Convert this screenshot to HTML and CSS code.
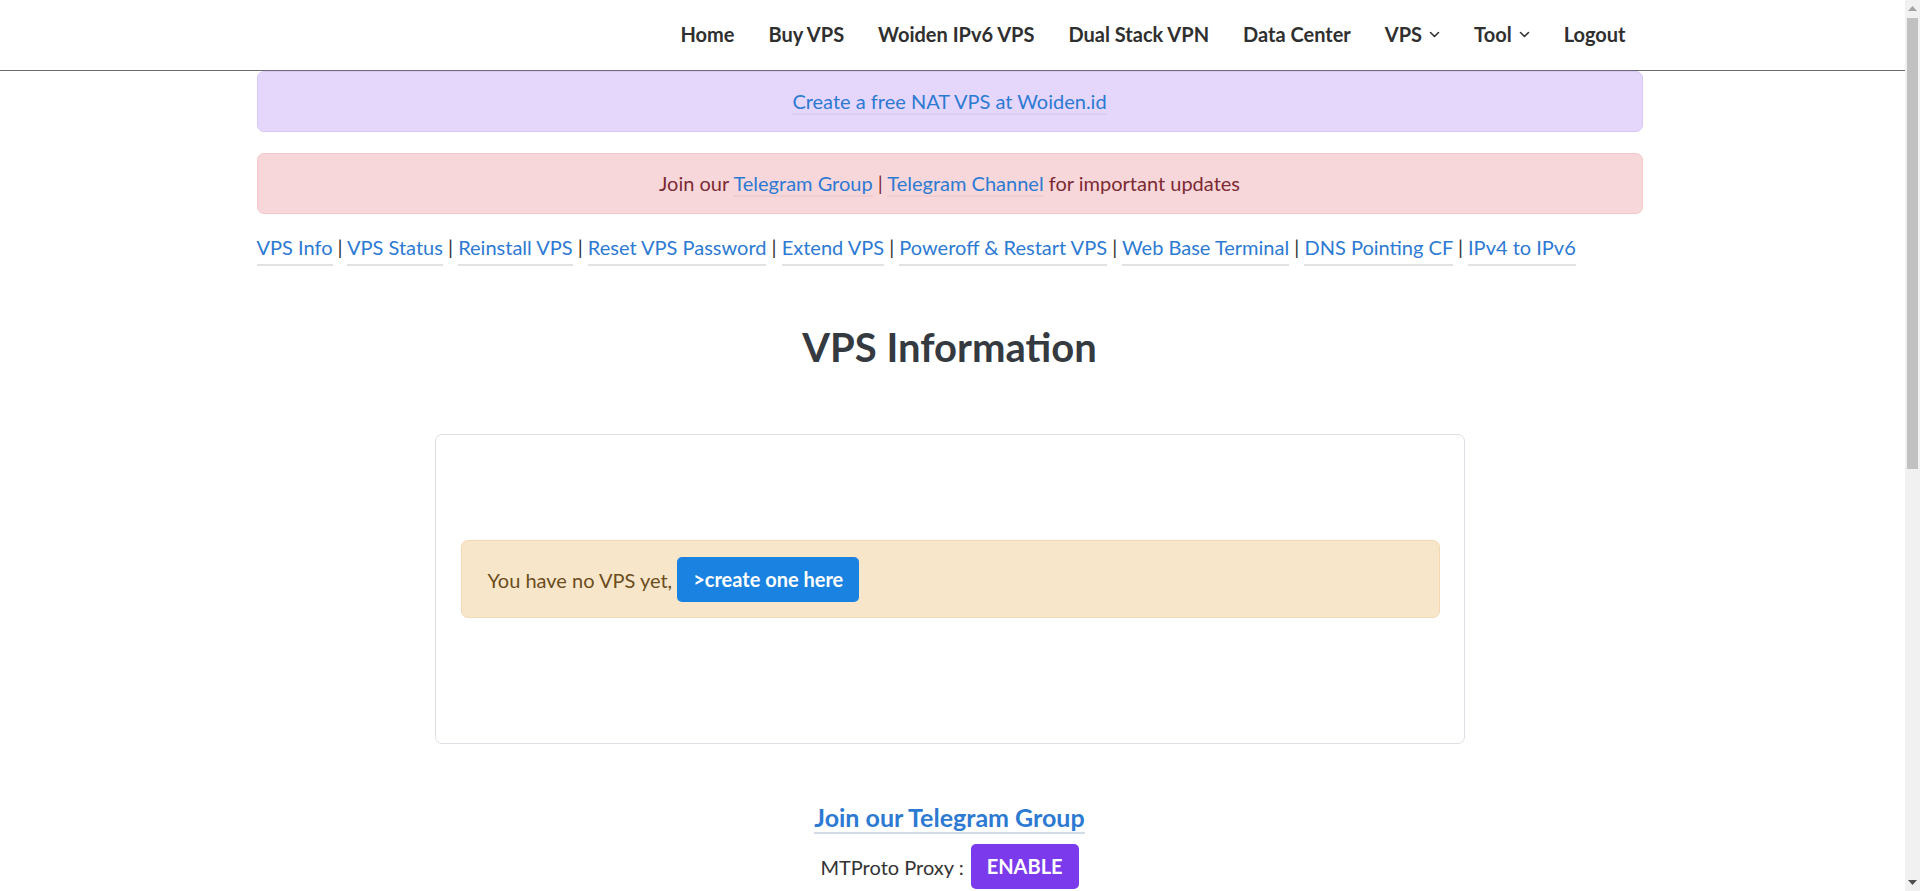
FILE: index.html
```html
<!DOCTYPE html>
<html lang="en">
<head>
<meta charset="utf-8">
<title>VPS Information</title>
<link rel="stylesheet" href="styles.css">
</head>
<body>
<div class="page">
  <header class="navbar">
    <div class="container nav-inner">
      <ul class="nav">
        <li><a class="nav-link" href="#">Home</a></li>
        <li><a class="nav-link" href="#">Buy VPS</a></li>
        <li><a class="nav-link" href="#">Woiden IPv6 VPS</a></li>
        <li><a class="nav-link" href="#">Dual Stack VPN</a></li>
        <li><a class="nav-link" href="#">Data Center</a></li>
        <li><a class="nav-link dropdown" href="#">VPS<svg class="chev" width="11" height="7" viewBox="0 0 11 7"><path d="M1.5 1.5l4 4 4-4" fill="none" stroke="#333" stroke-width="1.6" stroke-linecap="round" stroke-linejoin="round"/></svg></a></li>
        <li><a class="nav-link dropdown" href="#">Tool<svg class="chev" width="11" height="7" viewBox="0 0 11 7"><path d="M1.5 1.5l4 4 4-4" fill="none" stroke="#333" stroke-width="1.6" stroke-linecap="round" stroke-linejoin="round"/></svg></a></li>
        <li><a class="nav-link" href="#">Logout</a></li>
      </ul>
    </div>
  </header>

  <main class="container">
    <div class="alert alert-purple"><a class="link" href="#">Create a free NAT VPS at Woiden.id</a></div>
    <div class="alert alert-danger">Join our <a class="link" href="#">Telegram Group</a> | <a class="link" href="#">Telegram Channel</a> for important updates</div>

    <div class="tools">
      <a class="link" href="#">VPS Info</a> | <a class="link" href="#">VPS Status</a> | <a class="link" href="#">Reinstall VPS</a> | <a class="link" href="#">Reset VPS Password</a> | <a class="link" href="#">Extend VPS</a> | <a class="link" href="#">Poweroff &amp; Restart VPS</a> | <a class="link" href="#">Web Base Terminal</a> | <a class="link" href="#">DNS Pointing CF</a> | <a class="link" href="#">IPv4 to IPv6</a>
    </div>

    <h1 class="title">VPS Information</h1>

    <div class="card">
      <div class="alert-warning">You have no VPS yet, <a class="btn btn-blue" href="#">&gt;create one here</a></div>
    </div>

    <div class="telegram">
      <a class="tg-link" href="#">Join our Telegram Group</a>
    </div>
    <div class="proxy">
      <span>MTProto Proxy :</span>
      <a class="btn btn-purple" href="#">ENABLE</a>
    </div>
  </main>
</div>

<div class="scrollbar" aria-hidden="true">
  <div class="sb-btn"><svg width="9" height="5" viewBox="0 0 9 5"><path d="M0 5L4.5 0 9 5z" fill="#a3a3a3"/></svg></div>
  <div class="sb-track"><div class="sb-thumb"></div></div>
  <div class="sb-btn"><svg width="9" height="5" viewBox="0 0 9 5"><path d="M0 0h9L4.5 5z" fill="#505050"/></svg></div>
</div>
</body>
</html>
```

FILE: styles.css
```css
html, body {
  margin: 0;
  padding: 0;
}
body {
  font-family: Lato, "Open Sans", sans-serif;
  font-size: 20px;
  line-height: 30px;
  color: #333;
  background: #fff;
}
.page {
  width: calc(100% - 15px);
  min-height: 1690px;
}
a {
  text-decoration: none;
}
.container {
  width: 1386px;
  margin-left: calc(50% - 696px);
}
.navbar {
  border-bottom: 1px solid #6b6b6b;
  height: 70px;
  box-sizing: content-box;
}
.nav-inner {
  display: flex;
  justify-content: flex-end;
}
.nav {
  list-style: none;
  margin: 0;
  padding: 19px 0 21px;
  display: flex;
}
.nav-link {
  display: flex;
  align-items: center;
  padding: 0 17px;
  font-weight: 700;
  color: #2f2f2f;
}
.chev {
  margin-left: 7px;
  margin-top: 1px;
}
.alert {
  border: 1px solid transparent;
  border-radius: 7px;
  padding: 14px 16px 15px;
  text-align: center;
}
.alert-purple {
  background: #e5d7fb;
  border-color: #d9c7f7;
}
.alert-danger {
  margin-top: 21px;
  background: #f8d7da;
  border-color: #f5c6cb;
  color: #7c2a33;
}
.link {
  color: #2d7ad3;
  border-bottom: 2px solid rgba(0, 0, 0, 0.04);
}
.tools {
  margin-top: 18px;
  color: #333;
}
.tools .link {
  border-bottom: 2px solid #e2e2e2;
  padding-bottom: 5px;
}
.title {
  margin: 61px 0 0;
  font-size: 40px;
  line-height: 48px;
  font-weight: 700;
  text-align: center;
  color: #343a40;
}
.card {
  width: 1030px;
  margin: 63px auto 0;
  box-sizing: border-box;
  border: 1px solid #dcdfe3;
  border-radius: 7px;
  padding: 105px 24px 105px 25px;
}
.alert-warning {
  background: #f8e6cb;
  border: 1px solid #f3d9b3;
  border-radius: 7px;
  padding: 16px 26px 15px;
  margin-bottom: 20px;
  color: #6b4d1c;
  display: flex;
  align-items: center;
  gap: 5px;
}
.btn {
  display: inline-block;
  font-weight: 700;
  color: #fff;
  line-height: 31px;
  padding: 7px 16px;
  border-radius: 5px;
}
.btn-blue {
  background: #1a82e0;
}
.btn-purple {
  background: #7c3aed;
  padding: 7px 16px;
}
.telegram {
  margin-top: 58px;
  text-align: center;
}
.tg-link {
  font-size: 25px;
  font-weight: 700;
  line-height: 30px;
  color: #2d7ad3;
  border-bottom: 2px solid #d3dce6;
}
.proxy {
  margin-top: 10px;
  display: flex;
  justify-content: center;
  align-items: center;
  gap: 7px;
  color: #333;
}

/* imitation of the browser's classic scrollbar */
.scrollbar {
  position: fixed;
  top: 0;
  right: 0;
  bottom: 0;
  width: 15px;
  background: #f1f1f1;
  display: flex;
  flex-direction: column;
}
.sb-btn {
  height: 17px;
  display: flex;
  align-items: center;
  justify-content: center;
}
.sb-track {
  flex: 1;
  padding: 1px 2px 0;
}
.sb-thumb {
  height: 451px;
  background: #c1c1c1;
}
```
